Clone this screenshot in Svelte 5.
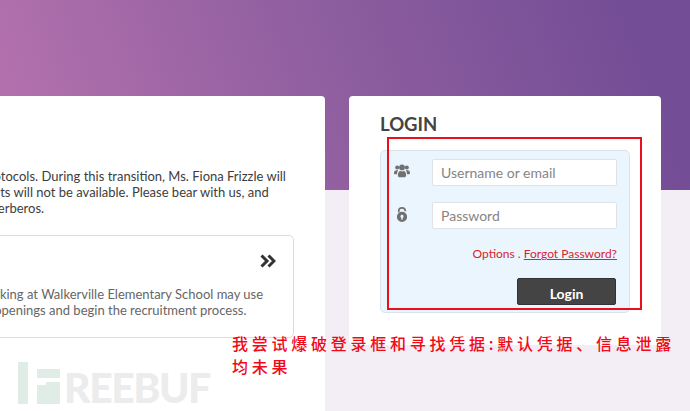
<script>
  // Landing page, scrolled sideways: news card on the left, login card on the right.
  const notice = [
    "communication to modern protocols. During this transition, Ms. Fiona Frizzle will",
    "be off as her class appointments will not be available. Please bear with us, and",
    "remember to log in with our Kerberos.",
  ];
  const posting = [
    "Teachers interested in working at Walkerville Elementary School may use",
    "this page to view current openings and begin the recruitment process.",
  ];
  let username = $state("");
  let password = $state("");
</script>

<div class="page">
  <section class="card news">
    <div class="notice">
      {#each notice as line}
        <p>{line}</p>
      {/each}
    </div>
    <div class="posting">
      <div class="posting-head">
        <svg class="chevrons" viewBox="0 0 16 14" aria-hidden="true">
          <path d="M1.5 1.5 7 7l-5.5 5.5M8.5 1.5 14 7l-5.5 5.5" />
        </svg>
      </div>
      {#each posting as line}
        <p>{line}</p>
      {/each}
    </div>
  </section>

  <section class="card login">
    <h2>LOGIN</h2>
    <form class="well" onsubmit={(e) => e.preventDefault()}>
      <div class="field">
        <svg class="icon" viewBox="0 0 16 14" aria-hidden="true">
          <circle cx="3.2" cy="3.6" r="2" />
          <circle cx="12.8" cy="3.6" r="2" />
          <path d="M0 9.4C0 7.2.9 6.2 2.4 6.2h2c-.9.9-1.4 2.2-1.4 4H1C.4 10.200 0 9.900 0 9.400ZM16 9.400c0 .5-.4.8-1 .8h-2c0-1.800-.5-3.100-1.400-4h2C15.100 6.200 16 7.200 16 9.400Z" />
          <circle cx="8" cy="3.400" r="2.900" />
          <path d="M3.900 11.200c0-2.700 1-4.300 2.600-4.300.4.300.9.500 1.500.500s1.100-.2 1.500-.5c1.600 0 2.600 1.600 2.600 4.300 0 1.300-.8 2.100-1.900 2.100H5.800c-1.100 0-1.900-.8-1.900-2.100Z" />
        </svg>
        <input placeholder="Username or email" bind:value={username} />
      </div>
      <div class="field">
        <svg class="icon lock" viewBox="0 0 10 15" aria-hidden="true">
          <path fill-rule="evenodd" d="M5 0C2.400 0 .9 1.700.9 3.900v1.300h1.700V3.900C2.600 2.600 3.500 1.700 5 1.700s2.400.9 2.400 2.200v.4h1.700v-.4C9.100 1.700 7.600 0 5 0ZM5 4.800A5 5 0 1 0 5 15 5 5 0 0 0 5 4.800Zm0 3a1.500 1.500 0 0 1 .8 2.800V12.400H4.200V10.600A1.500 1.500 0 0 1 5 7.800Z" />
        </svg>
        <input type="password" placeholder="Password" bind:value={password} />
      </div>
      <div class="links">Options . <a href="#forgot">Forgot Password?</a></div>
      <div class="actions"><button type="submit">Login</button></div>
    </form>
  </section>

  <div class="marker"></div>
  <p class="note">我尝试爆破登录框和寻找凭据:默认凭据、信息泄露均未果</p>

  <div class="watermark">
    <svg viewBox="0 0 43 42" aria-hidden="true">
      <rect x="0" y="0" width="10" height="42" />
      <rect x="19" y="7" width="23" height="9" />
      <path d="M19 23h9v-3h14v22H19Z" />
    </svg>
    <span>REEBUF</span>
  </div>
</div>

<style>
  :global(body) {
    margin: 0;
    font-family: Lato, "Liberation Sans", sans-serif;
  }
  .page {
    position: relative;
    display: flex;
    align-items: flex-start;
    gap: 24px;
    height: 411px;
    padding-top: 96px;
    box-sizing: border-box;
    overflow: hidden;
    background:
      linear-gradient(70deg, #b773af 0%, #8e5e9f 50%, #734d96 92%) top / 100% 190px no-repeat,
      #f3edf5;
  }
  .card {
    flex: none;
    background: #fff;
    border-radius: 4px;
    box-sizing: border-box;
  }
  .news {
    width: 625px;
    height: 340px;
    margin-left: -300px;
    padding: 72px 31px 0 20px;
  }
  .notice {
    padding-left: 108px;
  }
  .notice p {
    margin: 0;
    font-size: 13px;
    line-height: 16px;
    color: #3d3d3d;
    white-space: nowrap;
  }
  .posting {
    margin-top: 19px;
    height: 103px;
    box-sizing: border-box;
    border: 1px solid #dcdcdc;
    border-radius: 5px;
    padding: 0 10px 0 129px;
  }
  .posting p {
    margin: 0;
    font-size: 13px;
    line-height: 16px;
    color: #666;
    white-space: nowrap;
  }
  .posting-head {
    display: flex;
    justify-content: flex-end;
    height: 50px;
    padding: 18px 7px 0 0;
    box-sizing: border-box;
  }
  .chevrons {
    width: 16px;
    height: 14px;
    fill: none;
    stroke: #333;
    stroke-width: 3;
  }
  .login {
    width: 312px;
    height: 249px;
    padding: 16px 31px 0;
  }
  h2 {
    margin: 0 0 14px;
    font-size: 18.500px;
    line-height: 24px;
    font-weight: 700;
    color: #444;
  }
  .well {
    height: 163px;
    box-sizing: border-box;
    background: #ebf5fd;
    border: 1px solid #dbe2e8;
    border-radius: 5px;
    padding: 8px 12px 0 13px;
  }
  .field {
    display: flex;
    align-items: center;
    height: 27px;
    margin-bottom: 16px;
  }
  .icon {
    width: 16px;
    height: 14px;
    fill: #707070;
    margin: -4px 22px 0 0;
    flex: none;
  }
  .icon.lock {
    width: 10px;
    height: 15px;
    margin: -3px 25px 0 3px;
  }
  input {
    flex: none;
    width: 185px;
    height: 27px;
    box-sizing: border-box;
    border: 1px solid #dfe3e6;
    border-radius: 2px;
    background: #fff;
    padding: 0 8px;
    font: 14px Lato, sans-serif;
    outline: none;
  }
  input::placeholder {
    color: #858585;
    opacity: 1;
  }
  .links {
    margin-top: 9px;
    font-size: 12px;
    line-height: 18px;
    text-align: right;
    color: #d9232e;
  }
  .links a {
    color: inherit;
    text-decoration: underline;
  }
  .actions {
    display: flex;
    justify-content: flex-end;
    margin-top: 15px;
    padding-right: 1px;
  }
  button {
    width: 99px;
    height: 27px;
    border: 1px solid #333;
    border-radius: 2px;
    background: #444;
    color: #fff;
    font: 700 14px/1 Lato, sans-serif;
    padding: 5px 0 0;
  }
  .marker {
    position: absolute;
    left: 387px;
    top: 137px;
    width: 255px;
    height: 173px;
    box-sizing: border-box;
    border: 2px solid #e8101c;
  }
  .note {
    position: absolute;
    left: 232px;
    top: 332px;
    width: 450px;
    margin: 0;
    font-family: "Noto Sans CJK SC", sans-serif;
    font-weight: 500;
    font-size: 16px;
    line-height: 23px;
    letter-spacing: 3.750px;
    color: #f00a18;
  }
  .watermark {
    position: absolute;
    left: 18px;
    top: 362px;
    display: flex;
    align-items: flex-end;
    gap: 3px;
  }
  .watermark svg {
    width: 43px;
    height: 42px;
    fill: #e0ede7;
  }
  .watermark span {
    font: 900 41px/33px Lato, sans-serif;
    letter-spacing: -1.500px;
    height: 33px;
    color: #ececec;
  }
</style>
